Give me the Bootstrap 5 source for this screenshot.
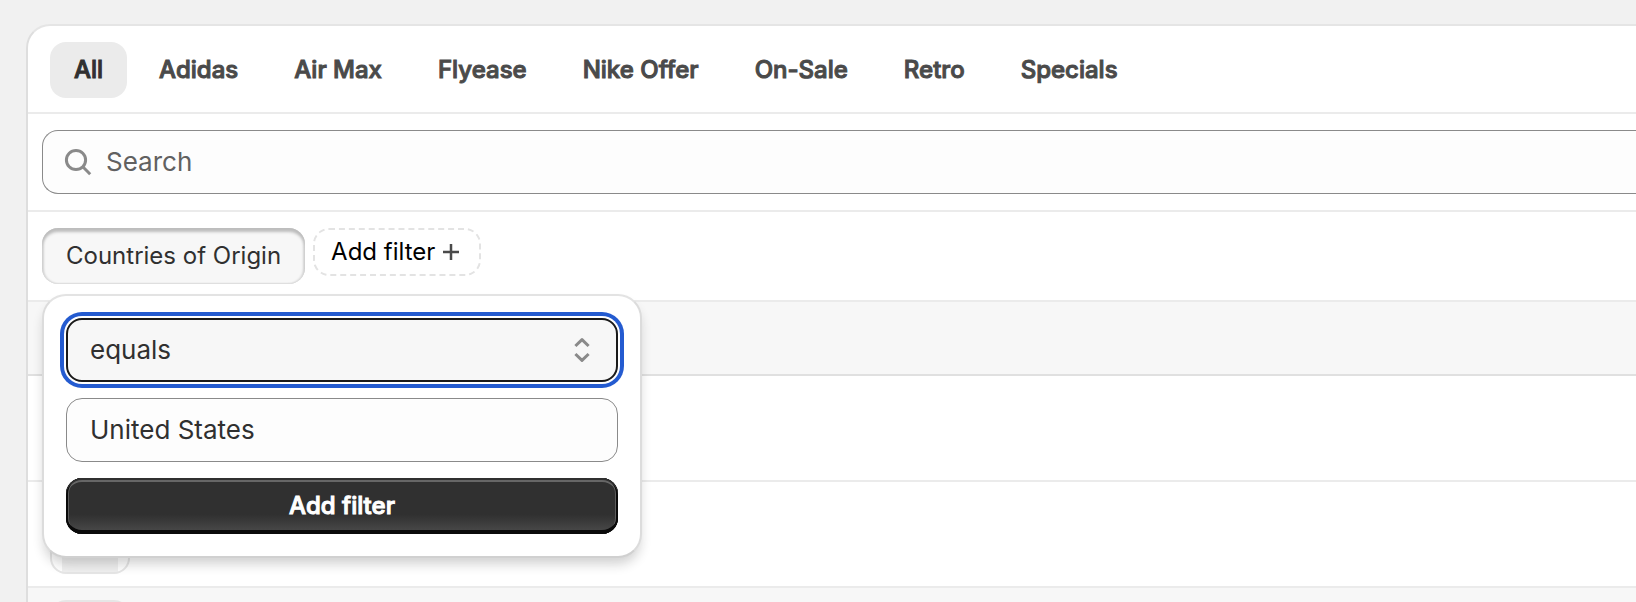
<!DOCTYPE html>
<html lang="en">
<head>
<meta charset="utf-8">
<meta name="viewport" content="width=device-width, initial-scale=1">
<title>Products</title>
<link href="https://cdn.jsdelivr.net/npm/bootstrap@5.3.0/dist/css/bootstrap.min.css" rel="stylesheet">
<style>
  body {
    background: #f1f1f1;
    color: #303030;
    font-family: Inter, "Liberation Sans", sans-serif;
    font-size: 24px;
    line-height: 32px;
  }
  .page { padding: 24px 0 0 26px; }
  .panel {
    background: #fff;
    border: 2px solid #dedede;
    border-top-color: #e5e5e5;
    border-right: 0;
    border-bottom: 0;
    border-radius: 24px 0 0 0;
  }
  .strip { border-bottom: 2px solid #ebebeb; }

  .view-tabs { gap: 8px; padding: 16px 22px 14px; }
  .view-tabs .nav-link {
    padding: 12px 24px;
    border-radius: 16px;
    color: #4a4a4a;
  }
  .view-tabs .nav-link.active { background: #ebebeb; color: #303030; }
  .heavy { font-weight: 500; -webkit-text-stroke: 1px currentColor; }

  .search-strip { padding: 16px 0 16px 14px; }
  .field {
    height: 64px;
    padding: 0 23px 2px;
    border: 1px solid #8a8a8a;
    border-radius: 16px;
    background: #fdfdfd;
    color: #303030;
    font-size: 26px;
    line-height: 40px;
  }
  .search-box {
    padding: 0 0 0 20px;
    gap: 11px;
    border-right: 0;
    border-radius: 16px 0 0 16px;
  }
  .search-box input { font-size: 26px; line-height: 40px; color: #303030; }
  .search-box input::placeholder { color: #616161; opacity: 1; }

  .filter-strip { gap: 8px; padding: 16px 14px; }
  .chip {
    padding: 12px 24px;
    border: 0;
    border-radius: 16px;
    background: #f7f7f7;
    color: #303030;
    box-shadow: inset 0 4px 3px #bdbdbd, inset 2px 0 2px #dadada, inset -2px 0 2px #dadada, inset 0 -1px 1px #e3e3e3;
  }
  .add-chip {
    gap: 6px;
    height: 48px;
    padding: 0 18px 0 16px;
    border: 2px dashed #e3e3e3;
    border-radius: 16px;
    background: transparent;
    color: #000;
  }

  .filter-menu {
    top: 100%;
    left: 0;
    width: 600px;
    max-width: calc(100vw - 56px);
    margin-top: 10px;
    padding: 22px;
    border: 2px solid #dcdcdc;
    border-top-color: #e3e3e3;
    border-bottom-color: #d0d0d0;
    border-radius: 24px;
    background: #fff;
    box-shadow: 0 8px 12px -2px rgba(26, 26, 26, .2);
    z-index: 10;
  }
  .select-field {
    appearance: none;
    border: 2px solid #1a1a1a;
    background: #f7f7f7;
    padding: 0 22px;
    outline: 0;
    box-shadow: 0 0 0 2px #fff, 0 0 0 6px #245bd0;
  }
  .select-arrows { right: 28px; top: 20px; pointer-events: none; }
  .apply-btn {
    height: 56px;
    border: 0;
    border-radius: 16px;
    background: linear-gradient(#303030 65%, #4c4c4c);
    color: #fff;
    box-shadow: inset 0 -4px 0 #0a0a0a, inset 0 2px 0 #303030, inset 2px 0 0 #0a0a0a, inset -2px 0 0 #0a0a0a, inset 0 4px 0 #666, inset 3px 0 0 #5c5c5c, inset -3px 0 0 #5c5c5c;
  }

  .grid-table { border-collapse: separate; border-spacing: 0; }
  .grid-table th { height: 74px; background: #f7f7f7; border-bottom: 2px solid #e0e0e0; }
  .grid-table td { height: 106px; padding: 12px 22px; border-bottom: 2px solid #ebebeb; }
  .grid-table .selected td { background: #f7f7f7; }
  .thumb {
    width: 80px;
    height: 80px;
    border: 2px solid #e6e6e6;
    border-radius: 16px;
    background: linear-gradient(#f0f0f0, #f0f0f0) center / 56px 100% no-repeat #fff;
  }
</style>
</head>
<body>
<main class="page vh-100 overflow-hidden d-flex flex-column">
  <section class="panel flex-fill">
    <nav class="view-tabs nav strip heavy" aria-label="Views">
      <a class="nav-link active" href="#" aria-current="page">All</a>
      <a class="nav-link" href="#">Adidas</a>
      <a class="nav-link" href="#">Air Max</a>
      <a class="nav-link" href="#">Flyease</a>
      <a class="nav-link" href="#">Nike Offer</a>
      <a class="nav-link" href="#">On-Sale</a>
      <a class="nav-link" href="#">Retro</a>
      <a class="nav-link" href="#">Specials</a>
    </nav>

    <div class="search-strip strip">
      <label class="field search-box d-flex align-items-center">
        <svg width="32" height="32" viewBox="0 0 32 32" fill="none" stroke="#8a8a8a" stroke-width="3" aria-hidden="true">
          <circle cx="13" cy="14" r="9.6"/><path d="M19.8 20.8l7.4 7.4"/>
        </svg>
        <input class="border-0 bg-transparent p-0 flex-fill" type="search" placeholder="Search" aria-label="Search">
      </label>
    </div>

    <div class="filter-strip strip d-flex align-items-start">
      <div class="position-relative">
        <button class="chip d-block" type="button" aria-expanded="true">Countries of Origin</button>
        <form class="filter-menu position-absolute d-grid gap-3">
          <div class="position-relative">
            <select class="field select-field w-100 d-block" aria-label="Condition">
              <option>equals</option>
              <option>not equals</option>
            </select>
            <svg class="select-arrows position-absolute" width="16" height="24" viewBox="0 0 16 24" fill="none" stroke="#8a8a8a" stroke-width="3" stroke-linejoin="round" aria-hidden="true">
              <path d="M1.400 8l6.600-6.400 6.600 6.400M1.400 16l6.600 6.400 6.600-6.400"/>
            </svg>
          </div>
          <input class="field w-100 d-block" type="text" value="United States" aria-label="Country">
          <button class="apply-btn heavy w-100" type="button">Add filter</button>
        </form>
      </div>
      <button class="add-chip d-flex align-items-center" type="button">Add filter
        <svg width="20" height="20" viewBox="0 0 20 20" fill="none" stroke="#4a4a4a" stroke-width="2.500" aria-hidden="true">
          <path d="M10 2v16M2 10h16"/>
        </svg>
      </button>
    </div>

    <table class="grid-table w-100" aria-label="Products">
      <thead><tr><th scope="col"></th></tr></thead>
      <tbody>
        <tr><td><div class="thumb"></div></td></tr>
        <tr><td><div class="thumb"></div></td></tr>
        <tr class="selected"><td><div class="thumb"></div></td></tr>
      </tbody>
    </table>
  </section>
</main>
<script src="https://cdn.jsdelivr.net/npm/bootstrap@5.3.0/dist/js/bootstrap.bundle.min.js"></script>
</body>
</html>
